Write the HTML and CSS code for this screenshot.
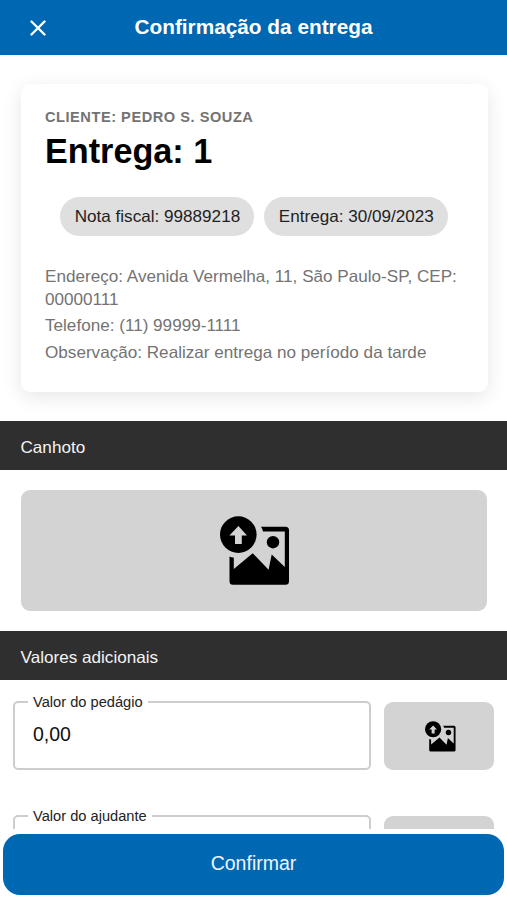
FILE: index.html
```html
<!DOCTYPE html>
<html lang="pt-BR">
<head>
    <meta charset="UTF-8">
    <meta name="viewport" content="width=device-width, initial-scale=1.0">
    <title>Confirmação da entrega</title>
    <link rel="stylesheet" href="styles.css">
</head>
<body>
    <svg class="sprite">
        <symbol id="icon-upload" viewBox="0 0 70 70">
            <circle cx="18.3" cy="18.6" r="18.3"/>
            <path class="arrow" d="M18.4 10 L27 19.4 H21.8 V28 H15 V19.4 H9.4 Z"/>
            <path d="M41 10.8 H65.5 Q69 10.8 69 14.3 V65.3 Q69 68.8 65.5 68.8 H13 Q9.5 68.8 9.5 65.3 V40.5 Q11.5 41.8 13.8 41.5 V53 L32.7 37.2 L48.6 53.8 L51.7 38.6 L64.8 51 V15.5 H43 Q42.5 13 41 10.8 Z"/>
            <circle cx="53" cy="26.2" r="6.2"/>
        </symbol>
    </svg>

    <header class="header">
        <button class="close" aria-label="Fechar">
            <svg viewBox="0 0 16 16"><path d="M1.5 1.5 L14.5 14.5 M14.5 1.5 L1.5 14.5"/></svg>
        </button>
        <h1>Confirmação da entrega</h1>
    </header>

    <main class="content">
        <div class="card">
            <h3 class="client">CLIENTE: PEDRO S. SOUZA</h3>
            <h2 class="delivery">Entrega: 1</h2>
            <div class="chips">
                <span class="chip">Nota fiscal: 99889218</span>
                <span class="chip">Entrega: 30/09/2023</span>
            </div>
            <div class="details">
                <p>Endereço: Avenida Vermelha, 11, São Paulo-SP, CEP: 00000111</p>
                <p>Telefone: (11) 99999-1111</p>
                <p>Observação: Realizar entrega no período da tarde</p>
            </div>
        </div>

        <div class="section">Canhoto</div>
        <button class="upload upload-large"><svg><use href="#icon-upload"/></svg></button>

        <div class="section">Valores adicionais</div>
        <div class="row">
            <fieldset class="field">
                <legend>Valor do pedágio</legend>
                <div class="value">0,00</div>
            </fieldset>
            <button class="upload upload-small"><svg><use href="#icon-upload"/></svg></button>
        </div>
        <div class="row">
            <fieldset class="field">
                <legend>Valor do ajudante</legend>
                <div class="value"></div>
            </fieldset>
            <button class="upload upload-small"></button>
        </div>
    </main>

    <footer class="footer">
        <button class="confirm">Confirmar</button>
    </footer>
</body>
</html>
```
FILE: styles.css
```css
* {
    box-sizing: border-box;
    margin: 0;
    padding: 0;
}
body {
    display: flex;
    flex-direction: column;
    height: 900px;
    overflow: hidden;
    background: #fff;
    font-family: "Liberation Sans", Arial, sans-serif;
    font-size: 17.12px;
}
button {
    border: none;
    font-family: inherit;
    cursor: pointer;
}
.sprite {
    display: none;
}
.arrow {
    fill: #d3d3d3;
}
.header {
    display: grid;
    grid-template-columns: 76px 1fr 76px;
    align-items: center;
    flex: none;
    height: 54.5px;
    background: #0067b2;
    color: #fff;
}
.header h1 {
    font-size: 20.8px;
    line-height: 24px;
    text-align: center;
}
.close {
    display: flex;
    justify-content: center;
    padding-top: 2px;
    background: none;
}
.close svg {
    width: 16px;
    height: 16px;
    fill: none;
    stroke: #fff;
    stroke-width: 2.4;
    stroke-linecap: round;
}
.content {
    flex: none;
    height: 774.5px;
    overflow: hidden;
}
.card {
    height: 308px;
    margin: 29px 19.5px 29.5px 21px;
    padding: 24.5px 24px 0;
    border-radius: 9px;
    box-shadow: 0 5px 20px rgba(0, 0, 0, 0.1);
}
.client {
    font-size: 14.6px;
    line-height: 18px;
    letter-spacing: 0.53px;
    color: #737373;
}
.delivery {
    margin-top: 5px;
    font-size: 34.2px;
    line-height: 40px;
    color: #000;
}
.chips {
    display: flex;
    justify-content: center;
    gap: 10px;
    margin-top: 25.5px;
}
.chip {
    height: 39px;
    padding: 0 14.3px;
    border-radius: 20px;
    background: #dfdfdf;
    color: #222;
    line-height: 39px;
}
.details {
    display: flex;
    flex-direction: column;
    gap: 3.5px;
    margin-top: 29.2px;
    color: #737373;
    line-height: 23px;
}
.section {
    height: 49px;
    padding: 3px 20.5px 0;
    background: #2f2f2f;
    color: #f4f4f4;
    line-height: 47px;
}
.upload {
    display: flex;
    justify-content: center;
    align-items: center;
    background: #d3d3d3;
    border-radius: 9px;
}
.upload-large {
    width: 466.5px;
    height: 121px;
    margin: 20px 20px 20px 20.5px;
}
.upload-large svg {
    width: 70px;
    height: 70px;
    margin-left: 2px;
}
.upload-small {
    width: 110.5px;
    height: 68px;
}
.upload-small svg {
    width: 31px;
    height: 31px;
    margin-left: 3px;
}
.row {
    display: flex;
    align-items: flex-end;
    gap: 12.5px;
    height: 90px;
    margin-bottom: 23.5px;
    padding: 0 13px;
}
.field {
    width: 358px;
    height: 76px;
    padding-left: 13px;
    border: 2px solid #cdcdcd;
    border-radius: 5px;
}
.field legend {
    padding: 0 5px;
    color: #222;
    font-size: 14.65px;
    line-height: 16px;
}
.value {
    padding: 12px 5px 0;
    color: #111;
    font-size: 19.5px;
    line-height: 24px;
}
.footer {
    padding: 5px 3px;
}
.confirm {
    width: 501px;
    height: 61px;
    border-radius: 17px;
    background: #0067b2;
    color: #eef6fc;
    font-size: 19.5px;
    line-height: 24px;
    padding-bottom: 3px;
}
```
